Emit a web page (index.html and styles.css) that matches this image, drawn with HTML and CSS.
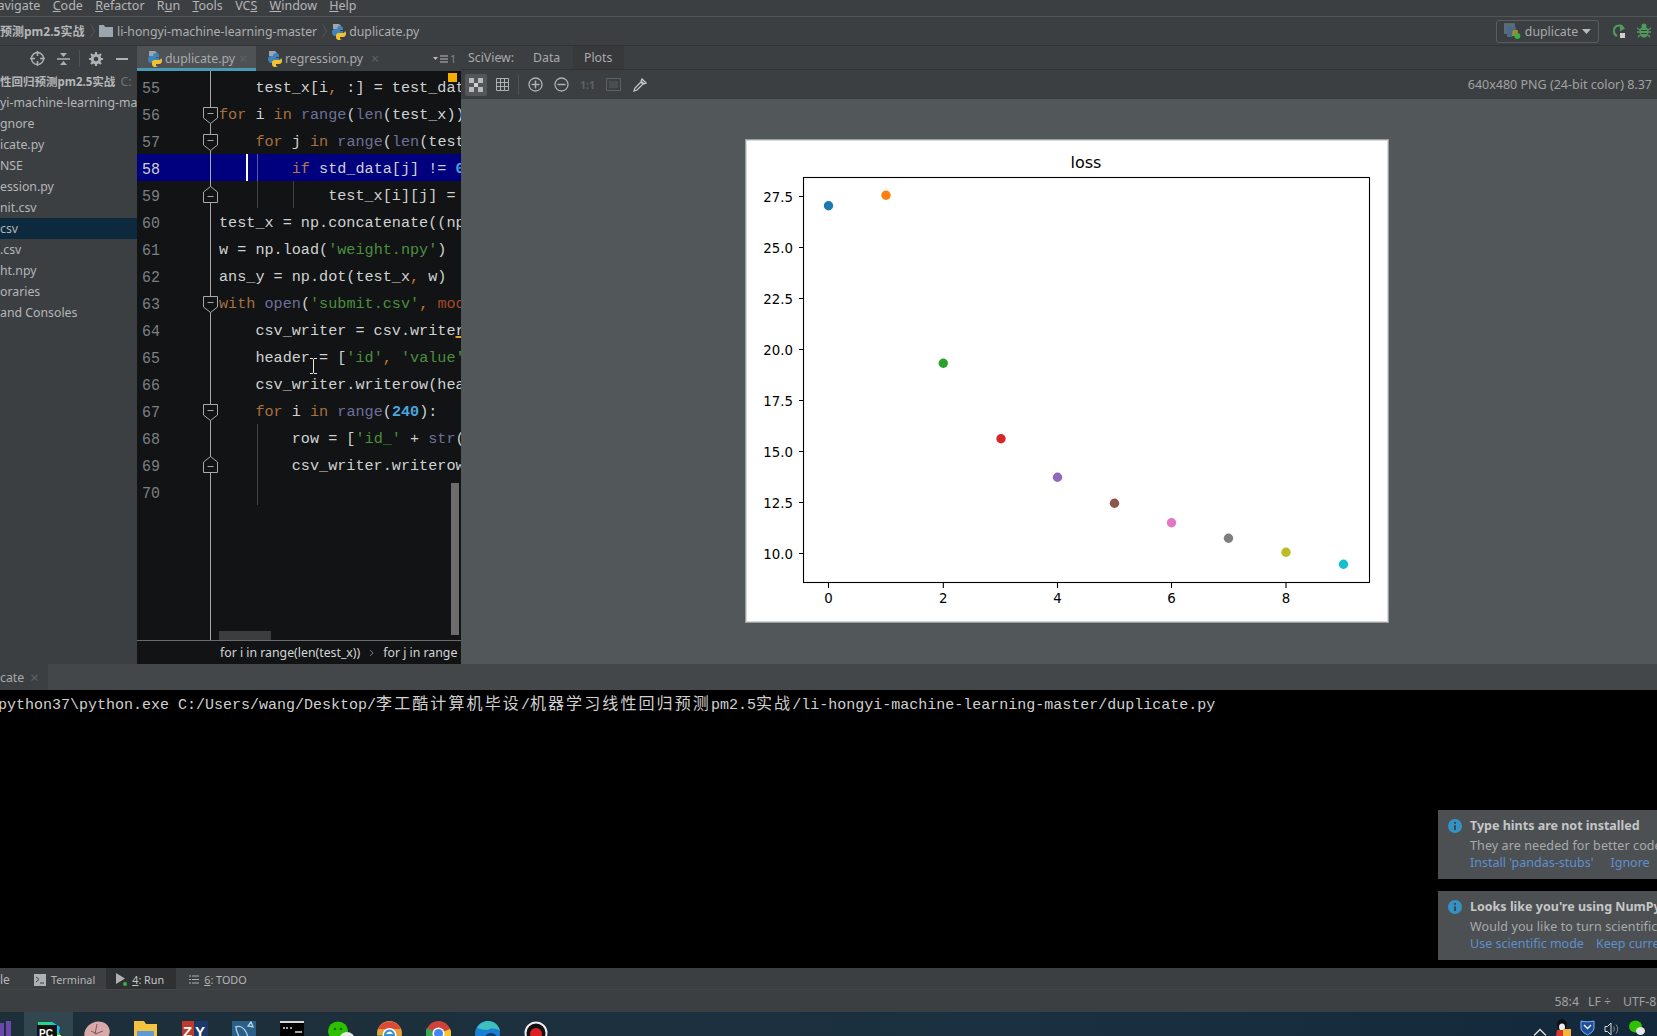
FILE: index.html
```html
<!DOCTYPE html>
<html lang="en">
<head>
<meta charset="utf-8">
<title>duplicate.py</title>
<link rel="stylesheet" href="styles.css">
</head>
<body>
<svg class="defs" width="0" height="0">
  <defs>
    <symbol id="py" viewBox="0 0 14 17">
      <path d="M1 1h6l2 2v3H1z" fill="#9aa7b0"/>
      <path d="M5 6c0-2 1-3 3-3s3 1 3 2v2H8v1h3v2H6c-1 0-2 1-2 2v1H2c-1-1-2-2-2-4s1-3 3-3h2z" fill="#3f83bd"/>
      <path d="M13 8c1 1 1 2 1 3s-1 3-3 3H8v1c0 1 1 2 2 2H6c-1-1-2-1-2-3v-2c0-1 1-2 2-2h5c1 0 2-1 2-2z" fill="#f2c230"/>
    </symbol>
    <symbol id="fold-down" viewBox="0 0 15 17">
      <path d="M.5.5h14v10.5l-7 5.5-7-5.5z" fill="#111315" stroke="#a8a8a8"/>
      <path d="M4.5 6.5h6" stroke="#a8a8a8"/>
    </symbol>
    <symbol id="fold-up" viewBox="0 0 15 17">
      <path d="M.5 16.5h14V6L7.500.5.5 6z" fill="#111315" stroke="#a8a8a8"/>
      <path d="M4.500 10.500h6" stroke="#a8a8a8"/>
    </symbol>
  </defs>
</svg>

<div class="app">
  <div class="menu">
    <span>avigate</span>
    <span><u>C</u>ode</span>
    <span><u>R</u>efactor</span>
    <span>R<u>u</u>n</span>
    <span><u>T</u>ools</span>
    <span>VC<u>S</u></span>
    <span><u>W</u>indow</span>
    <span><u>H</u>elp</span>
  </div>

  <div class="nav">
    <b class="crumb-root">预测pm2.5实战</b>
    <svg class="chev" width="5" height="14" viewBox="0 0 5 14"><path d="M.5.500l4 6.500-4 6.500" fill="none" stroke="#555"/></svg>
    <svg class="folder" width="14" height="12" viewBox="0 0 14 12"><path d="M0 0h5l1 2h8v10H0z" fill="#9aa7b0"/></svg>
    <span class="crumb">li-hongyi-machine-learning-master</span>
    <svg class="chev" width="5" height="14" viewBox="0 0 5 14"><path d="M.5.500l4 6.500-4 6.500" fill="none" stroke="#555"/></svg>
    <svg class="nav-py" width="14" height="17"><use href="#py"/></svg>
    <span class="crumb">duplicate.py</span>
    <div class="run-box">
      <svg width="17" height="18" viewBox="0 0 17 18"><rect x="0" y="1" width="11" height="11" fill="#5a6b7a"/><path d="M3 5h9v5H8v5H3z" fill="#4a6a8a"/><path d="M9 8h5v6H8v-2z" fill="#a08a3a"/><circle cx="13.500" cy="14" r="3" fill="#3fae3f"/></svg>
      <span>duplicate</span>
      <svg width="9" height="5" viewBox="0 0 9 5"><path d="M0 0h9L4.500 5z" fill="#bbb"/></svg>
    </div>
    <svg class="nav-run" width="14" height="16" viewBox="0 0 14 16"><path d="M11.500 5.500A5 5 0 0 0 2 8a5 5 0 0 0 3 5" fill="none" stroke="#4f9a5c" stroke-width="2"/><path d="M8 1l5 4.500-5 3z" fill="#4f9a5c"/><rect x="8" y="10" width="5" height="5" fill="#cfcfcf"/></svg>
    <svg class="nav-bug" width="14" height="16" viewBox="0 0 14 16"><ellipse cx="7" cy="9" rx="4.500" ry="5.500" fill="#4f9a5c"/><circle cx="7" cy="3" r="2.500" fill="#4f9a5c"/><path d="M0 5l3 2M14 5l-3 2M0 9h3M14 9h-3M1 14l2-2M13 14l-2-2" stroke="#4f9a5c" stroke-width="1.400"/><path d="M4 7.500h6M4 10.500h6" stroke="#3c3f41"/></svg>
  </div>

  <div class="main">
    <aside class="project">
      <div class="project-tools">
        <svg class="pt-target" width="15" height="15" viewBox="0 0 15 15"><circle cx="7.500" cy="7.500" r="6" fill="none" stroke="#aeb1b3" stroke-width="1.500"/><path d="M7.500 0v5M7.500 10v5M0 7.500h5M10 7.500h5" stroke="#aeb1b3" stroke-width="1.500"/></svg>
        <svg class="pt-collapse" width="13" height="14" viewBox="0 0 13 14"><path d="M0 7h13" stroke="#aeb1b3" stroke-width="1.500"/><path d="M3 1h7L6.500 5zM3 13h7L6.500 9z" fill="#aeb1b3"/></svg>
        <i class="pt-sep"></i>
        <svg class="pt-gear" width="14" height="14" viewBox="0 0 14 14"><circle cx="7" cy="7" r="3.800" fill="none" stroke="#aeb1b3" stroke-width="3"/><path d="M7 0v3M7 11v3M0 7h3M11 7h3M2 2l2 2M10 10l2 2M12 2l-2 2M2 12l2-2" stroke="#aeb1b3" stroke-width="2.200"/></svg>
        <i class="pt-min"></i>
      </div>
      <ul class="tree">
        <li><b>性回归预测pm2.5实战</b> <span class="muted">C:</span></li>
        <li>yi-machine-learning-mas</li>
        <li>gnore</li>
        <li>icate.py</li>
        <li>NSE</li>
        <li>ession.py</li>
        <li>nit.csv</li>
        <li class="selected">csv</li>
        <li>.csv</li>
        <li>ht.npy</li>
        <li>oraries</li>
        <li>and Consoles</li>
      </ul>
    </aside>

    <section class="editor">
      <div class="tabs">
        <div class="tab active">
          <svg width="14" height="17"><use href="#py"/></svg>
          <span>duplicate.py</span><em>×</em>
        </div>
        <div class="tab">
          <svg width="14" height="17"><use href="#py"/></svg>
          <span>regression.py</span><em>×</em>
        </div>
        <div class="tab-more">
          <svg width="5" height="3" viewBox="0 0 5 3"><path d="M0 0h5L2.500 3z" fill="#bbb"/></svg>
          <svg width="8" height="8" viewBox="0 0 8 8"><path d="M0 1h8M0 4h8M0 7h8" stroke="#bbb"/></svg>
          <span>1</span>
        </div>
      </div>
      <div class="code-area">
        <div class="line"><span class="num">55</span><span class="fold"></span><code>    test_x[i<span class="c">,</span> :] = test_data</code></div>
        <div class="line"><span class="num">56</span><span class="fold"><svg width="15" height="17"><use href="#fold-down"/></svg></span><code><span class="k">for</span> i <span class="k">in</span> <span class="b">range</span>(<span class="b">len</span>(test_x))</code></div>
        <div class="line"><span class="num">57</span><span class="fold"><svg width="15" height="17"><use href="#fold-down"/></svg></span><code>    <span class="k">for</span> j <span class="k">in</span> <span class="b">range</span>(<span class="b">len</span>(test</code></div>
        <div class="line current"><span class="num">58</span><span class="fold"></span><code class="caret g1">        <span class="k2">if</span> std_data[j] != <span class="n">0</span></code></div>
        <div class="line"><span class="num">59</span><span class="fold"><svg class="up" width="15" height="17"><use href="#fold-up"/></svg></span><code class="g1 g2">            test_x[i][j] =</code></div>
        <div class="line"><span class="num">60</span><span class="fold"></span><code>test_x = np.concatenate((np</code></div>
        <div class="line"><span class="num">61</span><span class="fold"></span><code>w = np.load(<span class="s">'weight.npy'</span>)</code></div>
        <div class="line"><span class="num">62</span><span class="fold"></span><code>ans_y = np.dot(test_x<span class="c">,</span> w)</code></div>
        <div class="line"><span class="num">63</span><span class="fold"><svg width="15" height="17"><use href="#fold-down"/></svg></span><code><span class="k">with</span> <span class="b">open</span>(<span class="s">'submit.csv'</span><span class="c">,</span> <span class="p">mod</span></code></div>
        <div class="line"><span class="num">64</span><span class="fold"></span><code>    csv_writer = csv.write<span class="warn">r</span></code></div>
        <div class="line"><span class="num">65</span><span class="fold"></span><code>    header = [<span class="s">'id'</span><span class="c">,</span> <span class="s">'value'</span></code></div>
        <div class="line"><span class="num">66</span><span class="fold"></span><code>    csv_writer.writerow(hea</code></div>
        <div class="line"><span class="num">67</span><span class="fold"><svg width="15" height="17"><use href="#fold-down"/></svg></span><code>    <span class="k">for</span> i <span class="k">in</span> <span class="b">range</span>(<span class="n">240</span>):</code></div>
        <div class="line"><span class="num">68</span><span class="fold"></span><code class="g1">        row = [<span class="s">'id_'</span> + <span class="b">str</span>(</code></div>
        <div class="line"><span class="num">69</span><span class="fold"><svg class="up" width="15" height="17"><use href="#fold-up"/></svg></span><code class="g1">        csv_writer.writerow</code></div>
        <div class="line"><span class="num">70</span><span class="fold"></span><code class="g1"></code></div>
        <i class="marker"></i>
        <i class="scroll-v"></i>
        <i class="scroll-h"></i>
        <svg class="ibeam" width="9" height="16" viewBox="0 0 9 16"><path d="M1 .500h3M5 .500h3M4.500 1v14M1 15.500h3M5 15.500h3" stroke="#e8e8e8" fill="none"/></svg>
      </div>
      <div class="breadcrumb">
        <span>for i in range(len(test_x))</span>
        <svg width="5" height="8" viewBox="0 0 5 8"><path d="M1 1l3 3-3 3" fill="none" stroke="#777"/></svg>
        <span>for j in range</span>
      </div>
    </section>

    <section class="sci">
      <div class="sci-tabs">
        <span class="sci-label">SciView:</span>
        <span class="sci-tab">Data</span>
        <span class="sci-tab on">Plots</span>
      </div>
      <div class="sci-tools">
        <span class="tool-on"><svg width="14" height="14" viewBox="0 0 14 14"><path d="M0 0h5v5H0zM9 0h5v5H9zM0 9h5v5H0zM9 9h5v5H9z" fill="#b8babb"/><path d="M5 5h4v4H5z" fill="#d0d2d3"/></svg></span>
        <svg class="t-grid" width="13" height="13" viewBox="0 0 13 13"><path d="M.5.500h12v12H.500zM.500 4.500h12M.500 8.500h12M4.500.500v12M8.500.500v12" fill="none" stroke="#aeb1b3"/></svg>
        <i class="t-sep"></i>
        <svg class="t-plus" width="15" height="15" viewBox="0 0 15 15"><circle cx="7.500" cy="7.500" r="6.500" fill="none" stroke="#aeb1b3" stroke-width="1.300"/><path d="M3.500 7.500h8M7.500 3.500v8" stroke="#aeb1b3" stroke-width="1.500"/></svg>
        <svg class="t-minus" width="15" height="15" viewBox="0 0 15 15"><circle cx="7.500" cy="7.500" r="6.500" fill="none" stroke="#aeb1b3" stroke-width="1.300"/><path d="M3.500 7.500h8" stroke="#aeb1b3" stroke-width="1.500"/></svg>
        <span class="t-one">1:1</span>
        <svg class="t-fit" width="15" height="13" viewBox="0 0 15 13"><path d="M.5.500h14v12H.500z" fill="none" stroke="#5e6163"/><path d="M3 3h9v7H3z" fill="#4a4d4f"/></svg>
        <svg class="t-drop" width="14" height="14" viewBox="0 0 14 14"><path d="M9 1l4 4-2 1-3-3zM8 4l2 2-6 6-3 1 1-3z" fill="none" stroke="#c4c6c8" stroke-width="1.300"/></svg>
        <span class="t-info">640x480 PNG (24-bit color) 8.37</span>
      </div>
      <div class="sci-pane">
        <figure class="plot">
          <svg class="chart" width="640" height="480" viewBox="0 0 640 480">
            <text class="title" x="339" y="27" text-anchor="middle">loss</text>
            <rect x="56.500" y="36.500" width="566" height="405" fill="none" stroke="#000" stroke-width="1.100"/>
            <g stroke="#000" stroke-width="1.100">
              <path d="M81.500 442v5M196.300 442v5M310.500 442v5M424.500 442v5M539 442v5"/>
              <path d="M52 55.500h4M52 106.500h4M52 157.500h4M52 208.500h4M52 259.500h4M52 310.500h4M52 361.500h4M52 412.500h4"/>
            </g>
            <g class="tick" text-anchor="middle">
              <text x="81.500" y="462">0</text>
              <text x="196.300" y="462">2</text>
              <text x="310.500" y="462">4</text>
              <text x="424.500" y="462">6</text>
              <text x="539" y="462">8</text>
            </g>
            <g class="tick" text-anchor="end">
              <text x="46" y="61">27.5</text>
              <text x="46" y="112">25.0</text>
              <text x="46" y="163">22.5</text>
              <text x="46" y="214">20.0</text>
              <text x="46" y="265">17.5</text>
              <text x="46" y="316">15.0</text>
              <text x="46" y="367">12.5</text>
              <text x="46" y="418">10.0</text>
            </g>
            <circle cx="81.500" cy="64.700" r="4.700" fill="#1f77b4"/>
            <circle cx="139" cy="54.300" r="4.700" fill="#ff7f0e"/>
            <circle cx="196.300" cy="222.300" r="4.700" fill="#2ca02c"/>
            <circle cx="254" cy="297.700" r="4.700" fill="#d62728"/>
            <circle cx="310.500" cy="336.300" r="4.700" fill="#9467bd"/>
            <circle cx="367.500" cy="362.300" r="4.700" fill="#8c564b"/>
            <circle cx="424.500" cy="381.700" r="4.700" fill="#e377c2"/>
            <circle cx="481.500" cy="397.300" r="4.700" fill="#7f7f7f"/>
            <circle cx="539" cy="411.300" r="4.700" fill="#bcbd22"/>
            <circle cx="596.500" cy="423.300" r="4.700" fill="#17becf"/>
          </svg>
        </figure>
      </div>
    </section>
  </div>

  <div class="run-head">
    <div class="run-tab"><span>cate</span><em>×</em></div>
  </div>

  <div class="console">
    <pre>python37\python.exe C:/Users/wang/Desktop/<span class="cjk">李工酷计算机毕设</span>/<span class="cjk">机器学习线性回归预测</span>pm2.5<span class="cjk">实战</span>/li-hongyi-machine-learning-master/duplicate.py</pre>
    <div class="notes">
      <div class="note">
        <div class="note-title"><svg width="14" height="14" viewBox="0 0 14 14"><circle cx="7" cy="7" r="7" fill="#3592c4"/><path d="M7 3v1.800M7 6.200V11" stroke="#3c3f41" stroke-width="1.800"/></svg><b>Type hints are not installed</b></div>
        <p>They are needed for better code</p>
        <div class="note-links"><a>Install 'pandas-stubs'</a><a>Ignore</a></div>
      </div>
      <div class="note">
        <div class="note-title"><svg width="14" height="14" viewBox="0 0 14 14"><circle cx="7" cy="7" r="7" fill="#3592c4"/><path d="M7 3v1.800M7 6.200V11" stroke="#3c3f41" stroke-width="1.800"/></svg><b>Looks like you're using NumPy</b></div>
        <p>Would you like to turn scientific</p>
        <div class="note-links tight"><a>Use scientific mode</a><a>Keep curre</a></div>
      </div>
    </div>
  </div>

  <div class="tools">
    <span class="tw-le">le</span>
    <span class="tw"><svg width="12" height="12" viewBox="0 0 12 12"><rect width="12" height="12" fill="#aeb1b3"/><path d="M2 3l3 2.500L2 8M6 9h4" fill="none" stroke="#3c3f41"/></svg>Terminal</span>
    <span class="tw tw-on"><svg width="11" height="13" viewBox="0 0 11 13"><path d="M0 0l9 5.500L0 11z" fill="#aeb1b3"/><circle cx="9" cy="11" r="2" fill="#3fae3f"/></svg><span><u>4</u>: Run</span></span>
    <span class="tw"><svg width="10" height="9" viewBox="0 0 10 9"><path d="M0 1h2M3 1h7M0 4.500h2M3 4.500h7M0 8h2M3 8h7" stroke="#aeb1b3"/></svg><span><u>6</u>: TODO</span></span>
  </div>

  <div class="status">
    <span>58:4</span>
    <span>LF ÷</span>
    <span>UTF-8</span>
  </div>

  <div class="taskbar">
    <span class="task"><svg width="28" height="28" viewBox="0 0 28 28"><path d="M8 8h4v20H8zM14 2h4v26h-4zM20 0h5v28h-5z" fill="#6b47b0"/></svg></span>
    <span class="task active"><svg width="30" height="30" viewBox="0 0 30 30"><path d="M5 1h14l6 4 3 15H5z" fill="#21d789"/><path d="M19 1l8 5-2 10h-6z" fill="#07c3f2"/><path d="M22 14h6v14h-6z" fill="#fcf84a"/><rect x="4" y="4" width="20" height="22" fill="#111"/><text class="pc" x="6" y="16">PC</text></svg></span>
    <span class="task"><svg width="28" height="28" viewBox="0 0 28 28"><ellipse cx="14" cy="12" rx="13" ry="11" fill="#d9a9a9" transform="rotate(-25 14 12)"/><path d="M14 3l-2 10 8-3M14 13l-6-3" stroke="#7a5a5a" fill="none"/><circle cx="21" cy="21" r="6" fill="#2a6f9a"/></svg></span>
    <span class="task"><svg width="26" height="30" viewBox="0 0 26 30"><path d="M1 0h10l2 3h11v25H1z" fill="#f4c342"/><rect x="4" y="10" width="17" height="10" fill="#5b9bd5"/></svg></span>
    <span class="task"><svg width="26" height="28" viewBox="0 0 26 28"><rect width="12" height="28" fill="#c0392b"/><rect x="12" width="14" height="28" fill="#1b3a6b"/><text class="zy" x="1" y="16">Z</text><text class="zy" x="13" y="16">Y</text></svg></span>
    <span class="task"><svg width="24" height="28" viewBox="0 0 24 28"><rect width="24" height="28" fill="#2a5f8a"/><path d="M3 6c5-2 9 1 11 5s2 7 5 10M4 6c0 5 2 8 4 11M19 1l-3 4 5 1z" fill="none" stroke="#b8d0e0" stroke-width="1.300"/></svg></span>
    <span class="task"><svg width="24" height="26" viewBox="0 0 24 26"><rect width="24" height="26" fill="#000"/><rect width="24" height="2" fill="#d8d8d8"/><path d="M3 7h2M6 7h2M10 7h2M15 11h7" stroke="#ddd" stroke-width="1.500"/></svg></span>
    <span class="task"><svg width="26" height="28" viewBox="0 0 26 28"><ellipse cx="10" cy="10" rx="10" ry="9.500" fill="#2dc100"/><ellipse cx="19" cy="18" rx="7.500" ry="7" fill="#e8e8e8"/><circle cx="7" cy="8" r="1.300" fill="#1a6a00"/><circle cx="13" cy="8" r="1.300" fill="#1a6a00"/><circle cx="16.500" cy="16" r="1" fill="#888"/><circle cx="21" cy="16" r="1" fill="#888"/></svg></span>
    <span class="task"><svg width="25" height="28" viewBox="0 0 25 28"><circle cx="12.500" cy="12.500" r="12.500" fill="#e8a13a"/><path d="M1 8a12.500 12.500 0 0 1 23 0z" fill="#d94a38"/><path d="M0 14a12.500 12.500 0 0 0 7 11V14z" fill="#4aa84a"/><circle cx="12.500" cy="14" r="7" fill="#fff"/><path d="M8 14h9a4.500 4.500 0 1 0-1.500 3.400" fill="none" stroke="#3b8fd0" stroke-width="2"/></svg></span>
    <span class="task"><svg width="25" height="28" viewBox="0 0 25 28"><circle cx="12.500" cy="12.500" r="12.500" fill="#d0413a"/><path d="M12.500 12.500L24 8a12.500 12.500 0 0 1-6 17z" fill="#f3c52f"/><path d="M12.500 12.500L7 25A12.500 12.500 0 0 1 1 7z" fill="#3aa757"/><circle cx="12.500" cy="12.500" r="6" fill="#fff"/><circle cx="12.500" cy="12.500" r="4.500" fill="#4285f4"/></svg></span>
    <span class="task"><svg width="25" height="28" viewBox="0 0 25 28"><circle cx="12.500" cy="12.500" r="12.500" fill="#1a7fd0"/><path d="M2 7C5 2 9 0 13 0c6 0 11 4 12 10-4-3-9-3-12-1-4 0-8-1-11-2z" fill="#3fc0c0"/><path d="M10 17c0-3 3-5 6-5s6 2 6 5H10z" fill="#123f72"/></svg></span>
    <span class="task"><svg width="24" height="28" viewBox="0 0 24 28"><circle cx="12" cy="12" r="11.500" fill="#111"/><circle cx="12" cy="12" r="10.500" fill="none" stroke="#eee" stroke-width="2"/><circle cx="12" cy="13" r="6" fill="#e02020"/></svg></span>
    <div class="tray">
      <svg width="14" height="8" viewBox="0 0 14 8"><path d="M1 7.500l6-6 6 6" fill="none" stroke="#e0e0e0" stroke-width="1.300"/></svg>
      <svg width="15" height="17" viewBox="0 0 15 17"><ellipse cx="6" cy="6" rx="5" ry="6" fill="#111"/><ellipse cx="6" cy="8" rx="3" ry="3.500" fill="#eee"/><path d="M1 11h10l1 6H0z" fill="#d9362b"/><rect x="7" y="10" width="8" height="7" fill="#f4b63a"/></svg>
      <svg width="15" height="17" viewBox="0 0 15 17"><path d="M1 2c4 1 9 1 13 0v7c0 3-3 5-6.500 7C4 14 1 12 1 9z" fill="#1d4f9e" stroke="#7fb3f0"/><path d="M4 6l3.500 3.500L11 6" fill="none" stroke="#fff" stroke-width="1.300"/></svg>
      <svg width="16" height="14" viewBox="0 0 16 14"><path d="M1 4.500h2.500L7 1v12L3.500 9.500H1z" fill="none" stroke="#ddd"/><path d="M9.500 4.500a4 4 0 0 1 0 5M12 2.500a7 7 0 0 1 0 9" fill="none" stroke="#888"/></svg>
      <svg width="16" height="16" viewBox="0 0 16 16"><ellipse cx="6.500" cy="6.500" rx="6.500" ry="6" fill="#2dc100"/><ellipse cx="11.500" cy="11" rx="4.500" ry="4" fill="#e8e8e8"/></svg>
      <svg class="tray-end" width="10" height="12" viewBox="0 0 10 12"><path d="M.5.500h9v6h-9zM.5 6.500v5" fill="none" stroke="#ddd"/></svg>
    </div>
  </div>
</div>
</body>
</html>
```

FILE: styles.css
```css
* { box-sizing: border-box; }
html, body { margin: 0; padding: 0; height: 100%; overflow: hidden; background: #3c3f41; }
.defs { position: absolute; }
u { text-underline-offset: 1px; }
em { font-style: normal; }
i { display: block; font-style: normal; }

.app {
  width: 1657px; height: 1036px; display: flex; flex-direction: column; overflow: hidden;
  font-family: "Noto Sans", "Noto Sans CJK SC", sans-serif; font-size: 12.300px; color: #b4b6b8;
  background: #3c3f41;
}

/* menu */
.menu { height: 17px; flex: none; display: flex; gap: 12.300px; line-height: 12px; border-bottom: 1px solid #515557; overflow: hidden; white-space: nowrap; font-size: 12.500px; }
.menu span:first-child { margin-left: -2.500px; }

/* nav bar */
.nav { height: 29px; flex: none; display: flex; align-items: center; border-bottom: 1px solid #303234; white-space: nowrap; }
.crumb-root { width: 85px; flex: none; color: #b4b6b8; font-size: 12px; }
.nav .chev { margin: 0 4px 0 5px; flex: none; }
.nav .nav-py { margin: 0 3px 0 1px; flex: none; }
.folder { margin-right: 4px; flex: none; }
.crumb { color: #acaeb0; }
.run-box { margin-left: auto; width: 103px; height: 23px; display: flex; align-items: center; gap: 4px; padding: 0 7px; border: 1px solid #5a5d5f; border-radius: 3px; color: #a8aaac; }
.run-box span { flex: 1; }
.nav-run { margin-left: 13px; flex: none; }
.nav-bug { margin: 0 6px 0 11px; flex: none; }

/* main */
.main { height: 618px; flex: none; display: flex; }

.project { width: 137px; flex: none; overflow: hidden; }
.project-tools { height: 25px; display: flex; align-items: center; }
.pt-target { margin-left: 30px; }
.pt-collapse { margin-left: 12px; }
.pt-sep { width: 1px; height: 17px; background: #505355; margin-left: 9px; }
.pt-gear { margin-left: 9px; }
.pt-min { width: 12px; height: 2px; background: #aeb1b3; margin-left: 13px; }
.tree { list-style: none; margin: 0; padding: 0; }
.tree li { height: 21px; line-height: 21px; white-space: nowrap; overflow: hidden; }
.tree b { color: #b4b6b8; font-size: 11.500px; }
.tree .muted { color: #6f7274; margin-left: 2px; }
.tree .selected { background: #0d293e; }

/* editor */
.editor { width: 324px; flex: none; display: flex; flex-direction: column; background: #111315; }
.tabs { height: 25px; flex: none; display: flex; background: #3c3f41; white-space: nowrap; }
.tab { width: 119px; display: flex; align-items: center; padding-left: 11px; gap: 3px; color: #a8aaac; }
.tab + .tab { width: 129px; padding-left: 12px; }
.tab em { color: #5e6163; margin-left: 5px; font-size: 14px; }
.tab.active { background: #4e5254; border-bottom: 3px solid #4a9ab5; padding-top: 2px; }
.tab.active em { margin-left: 1px; }
.tab-more { flex: 1; display: flex; align-items: center; justify-content: flex-end; gap: 2px; padding-right: 5px; font-size: 10px; color: #8a8c8e; }

.code-area {
  position: relative; flex: 1; padding-top: 2px; overflow: hidden;
  background: linear-gradient(#a8a8a8, #a8a8a8) 73px 0 / 1px 100% no-repeat;
}
.line { height: 27px; display: flex; font-family: "Liberation Mono", monospace; font-size: 15.170px; line-height: 31px; color: #d0d2d2; }
.line.current { background: linear-gradient(#a8a8a8, #a8a8a8) 73px 0 / 1px 100% no-repeat, #00007e; }
.num { width: 66px; flex: none; padding-left: 5px; color: #7d8082; font-size: 17px; transform: scaleX(.88); transform-origin: 5px 0; }
.current .num { color: #cfd2d6; }
.fold { width: 16px; flex: none; display: flex; align-items: center; justify-content: flex-start; }
.fold svg { flex: none; margin-top: 4px; }
.fold .up { margin-top: 0; }
code { flex: 1; min-width: 0; overflow: hidden; white-space: pre; font: inherit; }
.k { color: #a86f3f; }
.k2 { color: #b47a48; }
.b { color: #6e7099; }
.s { color: #4c8f3c; }
.c { color: #cc7832; }
.p { color: #a84a28; }
.n { color: #4aa6dd; font-weight: bold; }
.warn { text-decoration: underline 2px #e0a030; text-underline-offset: 1px; }
.g1 { background: linear-gradient(#3f4244, #3f4244) 38px 0 / 1px 100% no-repeat; }
.g1.g2 { background: linear-gradient(#3f4244, #3f4244) 38px 0 / 1px 100% no-repeat, linear-gradient(#3f4244, #3f4244) 74px 0 / 1px 100% no-repeat; }
.caret.g1 { background: linear-gradient(#fff, #fff) 27px 0 / 2px 100% no-repeat, linear-gradient(#5a5aa0, #5a5aa0) 38px 0 / 1px 100% no-repeat; }
.marker { position: absolute; top: 2px; left: 311px; width: 9px; height: 9px; background: #f5ae00; }
.scroll-v { position: absolute; top: 412px; left: 314px; width: 8px; height: 152px; background: #6c6c6c; }
.scroll-h { position: absolute; top: 560px; left: 82px; width: 52px; height: 9px; background: #3b3d3f; }
.ibeam { position: absolute; top: 287px; left: 172px; }
.breadcrumb { height: 24px; flex: none; border-top: 1px solid #6a6c6e; display: flex; align-items: center; gap: 9px; padding-left: 83px; white-space: nowrap; overflow: hidden; color: #d4d6d6; }
.breadcrumb svg { flex: none; }

/* sciview */
.sci { flex: 1; min-width: 0; display: flex; flex-direction: column; }
.sci-tabs { height: 24px; flex: none; display: flex; align-items: center; border-bottom: 1px solid #313335; color: #a8aaac; padding-left: 7px; }
.sci-label { width: 65px; }
.sci-tab { height: 23px; line-height: 23px; width: 40px; }
.sci-tab.on { width: 51px; padding-left: 11px; background: #37393b; }
.sci-tools { height: 29px; flex: none; display: flex; align-items: center; }
.tool-on { width: 22px; height: 22px; margin-left: 4px; background: #53575a; border-radius: 2px; display: flex; align-items: center; justify-content: center; }
.t-grid { margin-left: 9px; }
.t-sep { width: 1px; height: 20px; background: #505355; margin-left: 9px; }
.t-plus { margin-left: 9px; }
.t-minus { margin-left: 11px; }
.t-one { margin-left: 11px; width: 15px; font-size: 10.500px; color: #5e6163; font-weight: bold; }
.t-fit { margin-left: 11px; }
.t-drop { margin-left: 12px; }
.t-info { margin-left: auto; margin-right: 5px; color: #a0a2a4; white-space: nowrap; font-size: 12.500px; }
.sci-pane { flex: 1; min-height: 0; background: #52575a; display: flex; align-items: center; padding: 0 0 1px 285px; }
.plot { margin: 0; flex: none; border: 1px solid #d8dadb; box-shadow: 0 0 0 1px #9a9d9f; background: #fff; line-height: 0; }
.chart { display: block; font-family: "DejaVu Sans", sans-serif; }
.chart .title { font-size: 16px; fill: #000; }
.chart .tick { font-size: 13.330px; fill: #000; }

/* run */
.run-head { height: 26px; flex: none; background: #44474a; }
.run-tab { width: 48px; height: 26px; background: #3c3f41; display: flex; align-items: center; gap: 6px; color: #a8aaac; }
.run-tab em { color: #5e6163; font-size: 15px; }

.console { position: relative; height: 278px; flex: none; background: #000; overflow: hidden; }
.console pre { margin: 0 0 0 -2px; padding-top: 3px; font-family: "Liberation Mono", "Noto Sans CJK SC", monospace; font-size: 15px; line-height: 18px; color: #d0d0d0; white-space: pre; }
.cjk { font-family: "Noto Sans CJK SC", sans-serif; font-size: 16px; letter-spacing: 2.100px; line-height: 18px; }
.notes { position: absolute; top: 120px; right: 0; width: 219px; display: flex; flex-direction: column; gap: 12px; }
.note { height: 69px; background: #4d5052; padding: 7px 0 0 10px; white-space: nowrap; overflow: hidden; color: #a8aaac; font-size: 12.500px; line-height: 17px; }
.note-title { display: flex; align-items: center; gap: 8px; height: 17px; color: #c4c6c8; }
.note-title svg { flex: none; }
.note p { margin: 3px 0 0 22px; letter-spacing: .1px; }
.note-links { display: flex; gap: 17px; margin-left: 22px; color: #5d8fcf; }
.note-links.tight { gap: 12px; }

/* bottom */
.tools { height: 22px; flex: none; display: flex; align-items: stretch; border-bottom: 1px solid #44474a; font-size: 10.800px; }
.tools > span { display: flex; align-items: center; padding-top: 2px; }
.tw-le { width: 34px; font-size: 12px; }
.tw { gap: 5px; margin-right: 11px; }
.tw-on { width: 70px; margin-right: 13px; padding-left: 10px; background: #2e3032; color: #c4c6c8; }
.status { height: 22px; flex: none; display: flex; justify-content: flex-end; align-items: center; gap: 12px; color: #a0a2a4; white-space: nowrap; }
.status span:first-child { margin-right: -3px; }
.status span:last-child { width: 34px; overflow: hidden; }

.taskbar { height: 24px; flex: none; display: flex; overflow: hidden; background: linear-gradient(90deg, #1d2f39, #1b3040 60%, #13283a); margin-left: -24.800px; }
.task { width: 48.800px; height: 40px; flex: none; display: flex; justify-content: center; padding-top: 9px; }
.task svg { flex: none; }
.task.active { background: #32464f; }
.pc { font: bold 10px "Liberation Sans", sans-serif; fill: #fff; }
.zy { font: bold 15px "Liberation Sans", sans-serif; fill: #fff; }
.tray { margin-left: auto; margin-right: -10px; display: flex; align-items: flex-end; gap: 9px; height: 24px; }
.tray svg { flex: none; }
.tray-end { margin-left: 3px; }
```
